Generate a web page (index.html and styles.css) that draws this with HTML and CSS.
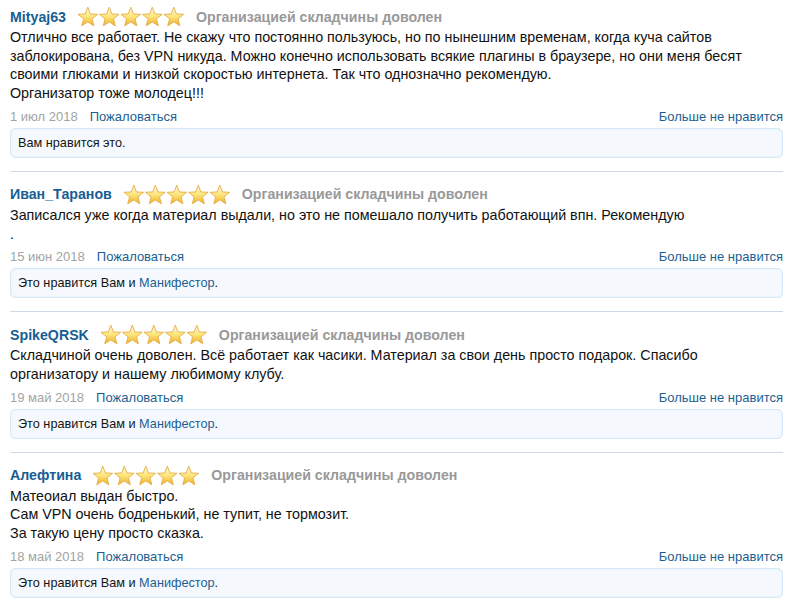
FILE: index.html
```html
<!DOCTYPE html>
<html lang="ru">
<head>
<meta charset="utf-8">
<title>Отзывы</title>
<link rel="stylesheet" href="styles.css">
</head>
<body>
<svg class="defs" width="0" height="0" aria-hidden="true">
  <defs>
    <linearGradient id="sg" x1="0" y1="0" x2="0" y2="1">
      <stop offset="0" stop-color="#fffde8"/>
      <stop offset="0.5" stop-color="#fce57a"/>
      <stop offset="1" stop-color="#eeb02a"/>
    </linearGradient>
    <polygon id="star" points="0,-10.3 2.586,-3.56 9.8,-3.2 4.185,1.36 6.05,8.35 0,4.4 -6.05,8.35 -4.185,1.36 -9.8,-3.2 -2.586,-3.56" fill="url(#sg)" stroke="#e6ab45" stroke-width="0.9" stroke-linejoin="round"/>
  </defs>
</svg>
<div class="page">

  <div class="review first">
    <div class="head">
      <a class="name">Mityaj63</a>
      <svg class="stars" width="108" height="22" viewBox="0 0 108 22"><use href="#star" x="10.8" y="11.5"/><use href="#star" x="32.3" y="11.5"/><use href="#star" x="53.8" y="11.5"/><use href="#star" x="75.3" y="11.5"/><use href="#star" x="96.8" y="11.5"/></svg>
      <span class="verdict">Организацией складчины доволен</span>
    </div>
    <div class="text">Отлично все работает. Не скажу что постоянно пользуюсь, но по нынешним временам, когда куча сайтов заблокирована, без VPN никуда. Можно конечно использовать всякие плагины в браузере, но они меня бесят своими глюками и низкой скоростью интернета. Так что однозначно рекомендую.<br>Организатор тоже молодец!!!</div>
    <div class="meta">
      <span class="date">1 июл 2018</span>
      <a class="link">Пожаловаться</a>
      <a class="link unlike">Больше не нравится</a>
    </div>
    <div class="likes">Вам нравится это.</div>
  </div>

  <div class="review">
    <div class="head">
      <a class="name">Иван_Таранов</a>
      <svg class="stars" width="108" height="22" viewBox="0 0 108 22"><use href="#star" x="10.8" y="11.5"/><use href="#star" x="32.3" y="11.5"/><use href="#star" x="53.8" y="11.5"/><use href="#star" x="75.3" y="11.5"/><use href="#star" x="96.8" y="11.5"/></svg>
      <span class="verdict">Организацией складчины доволен</span>
    </div>
    <div class="text">Записался уже когда материал выдали, но это не помешало получить работающий впн. Рекомендую<br>.</div>
    <div class="meta">
      <span class="date">15 июн 2018</span>
      <a class="link">Пожаловаться</a>
      <a class="link unlike">Больше не нравится</a>
    </div>
    <div class="likes">Это нравится Вам и <a class="link">Манифестор</a>.</div>
  </div>

  <div class="review">
    <div class="head">
      <a class="name">SpikeQRSK</a>
      <svg class="stars" width="108" height="22" viewBox="0 0 108 22"><use href="#star" x="10.8" y="11.5"/><use href="#star" x="32.3" y="11.5"/><use href="#star" x="53.8" y="11.5"/><use href="#star" x="75.3" y="11.5"/><use href="#star" x="96.8" y="11.5"/></svg>
      <span class="verdict">Организацией складчины доволен</span>
    </div>
    <div class="text">Складчиной очень доволен. Всё работает как часики. Материал за свои день просто подарок. Спасибо организатору и нашему любимому клубу.</div>
    <div class="meta">
      <span class="date">19 май 2018</span>
      <a class="link">Пожаловаться</a>
      <a class="link unlike">Больше не нравится</a>
    </div>
    <div class="likes">Это нравится Вам и <a class="link">Манифестор</a>.</div>
  </div>

  <div class="review last">
    <div class="head">
      <a class="name">Алефтина</a>
      <svg class="stars" width="108" height="22" viewBox="0 0 108 22"><use href="#star" x="10.8" y="11.5"/><use href="#star" x="32.3" y="11.5"/><use href="#star" x="53.8" y="11.5"/><use href="#star" x="75.3" y="11.5"/><use href="#star" x="96.8" y="11.5"/></svg>
      <span class="verdict">Организацией складчины доволен</span>
    </div>
    <div class="text">Матеоиал выдан быстро.<br>Сам VPN очень бодренький, не тупит, не тормозит.<br>За такую цену просто сказка.</div>
    <div class="meta">
      <span class="date">18 май 2018</span>
      <a class="link">Пожаловаться</a>
      <a class="link unlike">Больше не нравится</a>
    </div>
    <div class="likes">Это нравится Вам и <a class="link">Манифестор</a>.</div>
  </div>

</div>
</body>
</html>
```
FILE: styles.css
```css
html, body {
  margin: 0;
  padding: 0;
  background: #ffffff;
}
body {
  font-family: "Liberation Sans", Arial, sans-serif;
  font-size: 13px;
  line-height: 19px;
  color: #141414;
}
.defs {
  position: absolute;
  width: 0;
  height: 0;
  overflow: hidden;
}
.page {
  padding: 0 7px 0 10px;
}
.review {
  padding-top: 12px;
  border-bottom: 1px solid #cfd9e3;
}
.review.first {
  padding-top: 6px;
}
.review.last {
  border-bottom: none;
}
.head {
  display: flex;
  align-items: center;
  height: 22px;
  gap: 11px;
  font-size: 14.2px;
}
.name {
  font-weight: bold;
  color: #175e93;
}
.stars {
  display: block;
}
.verdict {
  font-weight: bold;
  color: #999999;
}
.text {
  font-size: 14.3px;
  line-height: 18.7px;
  color: #111111;
}
.meta {
  display: flex;
  margin-top: 4px;
  gap: 12px;
}
.date {
  color: #a3a3a3;
}
.link {
  color: #1b5f92;
  text-decoration: none;
}
.unlike {
  margin-left: auto;
}
.likes {
  margin: 2px 0 13px;
  padding: 5px 7px;
  font-size: 12.7px;
  line-height: 18px;
  border: 1px solid #d6e9f6;
  border-radius: 5px;
  background: #f5f9fe;
  box-shadow: inset 0 0 2px rgba(200, 225, 245, 0.5);
}
```
